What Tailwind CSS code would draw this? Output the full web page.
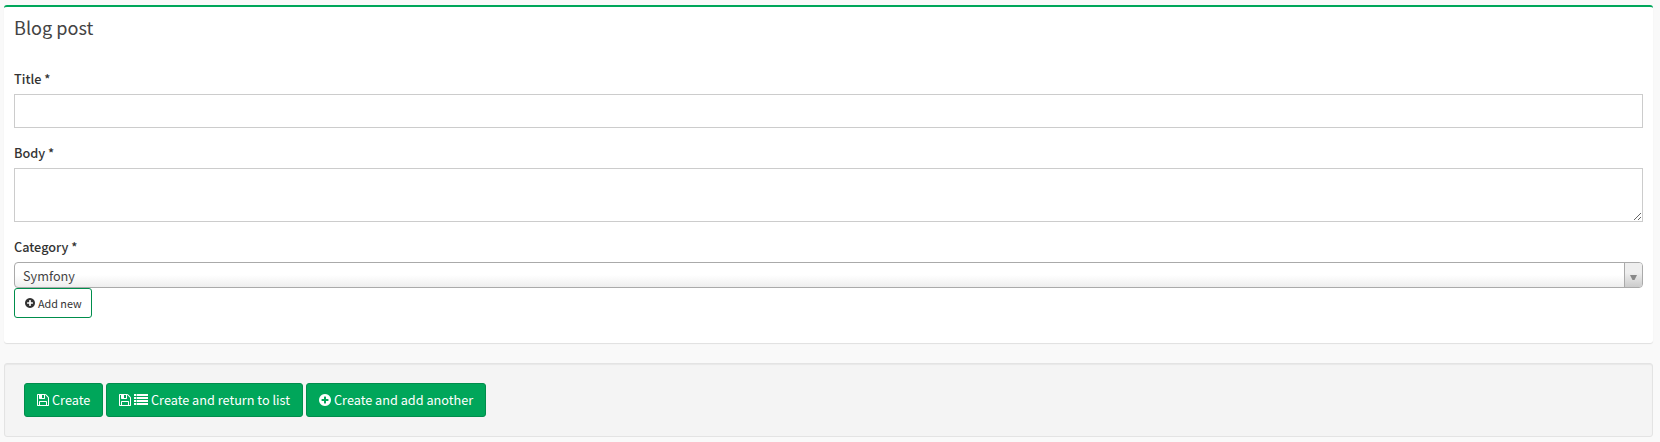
<!DOCTYPE html>
<html lang="en">
<head>
<meta charset="utf-8">
<title>Blog post</title>
<script src="https://cdn.jsdelivr.net/npm/@tailwindcss/browser@4"></script>
</head>
<body class="h-[442px] overflow-hidden bg-[#f9f9f9] pt-[5px] pl-1 pr-[7px] font-['Noto_Sans_CJK_SC','Noto_Sans',sans-serif] text-[12.7px] leading-5 text-[#333]">
<svg class="hidden">
  <symbol id="save" viewBox="0 128 1536 1536"><path d="M384 1536h768v-384h-768v384zm896 0h128v-896q0-14-10-38.5t-20-34.5l-281-281q-10-10-34-20t-39-10v416q0 40-28 68t-68 28h-576q-40 0-68-28t-28-68v-416h-128v1280h128v-416q0-40 28-68t68-28h832q40 0 68 28t28 68v416zm-384-928v-320q0-13-9.5-22.5t-22.5-9.5h-192q-13 0-22.5 9.5t-9.5 22.5v320q0 13 9.5 22.5t22.5 9.5h192q13 0 22.5-9.5t9.5-22.5zm640 32v928q0 40-28 68t-68 28h-1344q-40 0-68-28t-28-68v-1344q0-40 28-68t68-28h928q40 0 88 20t76 48l280 280q28 28 48 76t20 88z"/></symbol>
  <symbol id="plus" viewBox="0 128 1536 1536"><path d="M1216 960v-128q0-26-19-45t-45-19h-256v-256q0-26-19-45t-45-19h-128q-26 0-45 19t-19 45v256h-256q-26 0-45 19t-19 45v128q0 26 19 45t45 19h256v256q0 26 19 45t45 19h128q26 0 45-19t19-45v-256h256q26 0 45-19t19-45zm320-64q0 209-103 385.5t-279.5 279.5-385.5 103-385.5-103-279.5-279.5-103-385.5 103-385.5 279.5-279.5 385.5-103 385.5 103 279.5 279.5 103 385.5z"/></symbol>
  <symbol id="list" viewBox="0 0 14 11"><path d="M0 0h2v2H0zM2.6 0h11.4v2H2.6zM0 3h2v2H0zM2.6 3h11.4v2H2.6zM0 6h2v2H0zM2.6 6h11.4v2H2.6zM0 9h2v2H0zM2.6 9h11.4v2H2.6z"/></symbol>
</svg>
<section class="flex h-[338px] flex-col rounded-[3px] border-t-2 border-[#00a65a] bg-white px-[10px] shadow-[0_1px_1px_rgba(0,0,0,0.1)]">
  <h3 class="mt-[10px] h-5 whitespace-nowrap text-[18.1px] font-normal leading-5 text-[#444]">Blog post</h3>
  <label for="title" class="mt-[32px] h-5 font-medium">Title *</label>
  <input id="title" class="mt-[5px] h-[34px] w-full border border-[#ccc] bg-white px-3 outline-none">
  <label for="body" class="mt-[15px] h-5 font-medium">Body *</label>
  <textarea id="body" class="mt-[5px] h-[54px] w-full resize-y border border-[#ccc] bg-white px-3 outline-none"></textarea>
  <label class="mt-[15px] h-5 font-medium">Category *</label>
  <div class="mt-[5px] flex h-[26px] shrink-0 overflow-hidden rounded-[4px] border border-[#aaa] bg-linear-to-b from-white from-50% to-[#eee]">
    <span class="flex-1 pl-2 leading-[26px] text-[#444]">Symfony</span>
    <span class="flex w-[18px] items-center justify-center border-l border-[#aaa] bg-linear-to-t from-[#ccc] to-[#eee] to-60%">
      <svg class="mt-[5px] h-[5px] w-[7px] fill-[#888]" viewBox="0 0 7 5"><path d="M0 0h7L4.5 5h-2z"/></svg>
    </span>
  </div>
  <button class="flex h-[30px] w-[78px] shrink-0 items-center rounded-[3px] border border-[#008d4c] bg-white pl-[10px] text-[10.8px] leading-[18px] whitespace-nowrap">
    <svg class="mr-[3px] size-[10px] shrink-0 fill-[#333]"><use href="#plus"/></svg>Add new
  </button>
</section>
<section class="mt-5 flex h-[74px] w-[1649px] gap-[3px] rounded-[3px] border border-[#e3e3e3] bg-[#f4f4f4] px-[19px] py-[19px] font-normal text-white shadow-[inset_0_1px_1px_rgba(0,0,0,0.05)]">
  <button class="flex h-[34px] w-[79px] items-center whitespace-nowrap rounded-[3px] border border-[#008d4c] bg-[#00a65a] pl-3">
    <svg class="mr-[3px] size-3 shrink-0 fill-white"><use href="#save"/></svg>Create
  </button>
  <button class="flex h-[34px] w-[197px] items-center whitespace-nowrap rounded-[3px] border border-[#008d4c] bg-[#00a65a] pl-3">
    <svg class="mr-[3px] size-3 shrink-0 fill-white"><use href="#save"/></svg><svg class="mr-[3px] mb-px h-[11px] w-[14px] shrink-0 fill-white"><use href="#list"/></svg>Create and return to list
  </button>
  <button class="flex h-[34px] w-[180px] items-center whitespace-nowrap rounded-[3px] border border-[#008d4c] bg-[#00a65a] pl-3">
    <svg class="mr-[3px] size-3 shrink-0 fill-white"><use href="#plus"/></svg>Create and add another
  </button>
</section>
</body>
</html>
